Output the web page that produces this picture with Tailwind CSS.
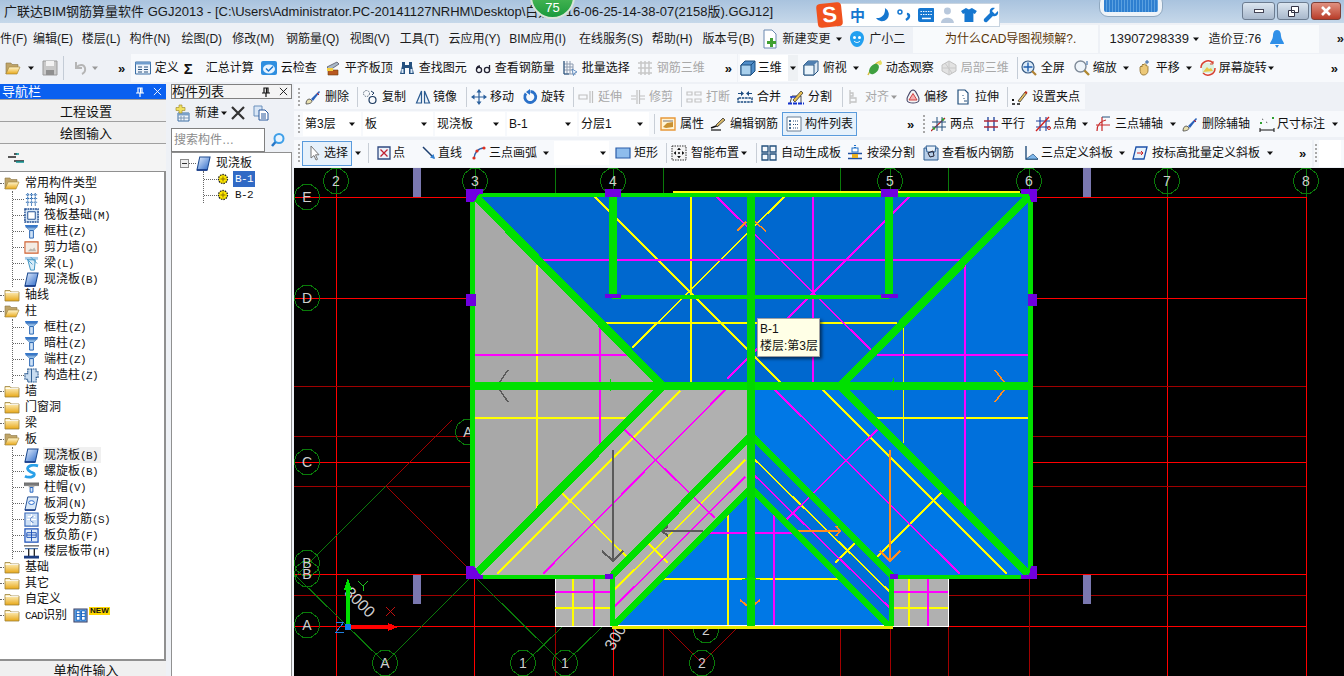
<!DOCTYPE html>
<html lang="zh-CN">
<head>
<meta charset="UTF-8" />
<title>广联达BIM钢筋算量软件 GGJ2013</title>
<script src="https://cdn.jsdelivr.net/npm/@tailwindcss/browser@4"></script>
</head>
<body class="bg-[#eef1f6]">
<!-- icon sheet -->
<svg class="absolute w-0 h-0">
<defs>
<linearGradient id="gf" x1="0" y1="0" x2="0" y2="1"><stop offset="0" stop-color="#fff6d0"/><stop offset="1" stop-color="#e8a818"/></linearGradient>
<linearGradient id="gb" x1="0" y1="0" x2="1" y2="1"><stop offset="0" stop-color="#e8f2ff"/><stop offset="1" stop-color="#2a68c8"/></linearGradient>
<symbol id="c" viewBox="0 0 10 10"><path d="M2 3.500h6L5 7z" fill="#111"/></symbol>
<symbol id="cg" viewBox="0 0 10 10"><path d="M2 3.500h6L5 7z" fill="#999"/></symbol>
<symbol id="fo" viewBox="0 0 16 16"><path d="M1 3h5l1 1.500h6V8H4l-3 6z" fill="#bfa468" stroke="#8a7544" stroke-width=".6"/><path d="M4 7h11l-3 7H1z" fill="url(#gf)" stroke="#a98b3c" stroke-width=".7"/></symbol>
<symbol id="fc" viewBox="0 0 16 16"><path d="M1 3.500h5l1 1.500h8v9H1z" fill="url(#gf)" stroke="#9c8238" stroke-width=".8"/><path d="M1.500 5.500h13" stroke="#fff" stroke-width=".8"/></symbol>
<symbol id="sv" viewBox="0 0 16 16"><path d="M1 1h14v14H1z" fill="#c8c8c8" stroke="#9a9a9a"/><path d="M4 1h8v5H4z" fill="#f2f2f2"/><path d="M4 10h8v5H4z" fill="#8f8f8f"/></symbol>
<symbol id="un" viewBox="0 0 16 16"><path d="M4 2v6h6M4.500 7.500C7 4 12 4 13 8c.5 2.500-1 5-3 6" fill="none" stroke="#b5b5b5" stroke-width="2"/></symbol>
<symbol id="def" viewBox="0 0 16 16"><path d="M.500 2h15v12H.500z" fill="#eef4fb" stroke="#3a6ea5"/><path d="M.500 2h15v2.500H.500z" fill="#6f9ccc"/><path d="M3 7h4M3 9.500h4M3 12h4M9 7h4M9 9.500h4M9 12h4" stroke="#28507c"/></symbol>
<symbol id="cl" viewBox="0 0 16 16"><rect y="1" width="16" height="14" rx="2" fill="#2f8fe0"/><ellipse cx="8" cy="9" rx="6" ry="4.500" fill="#e8f4ff"/><path d="M5 8.500l2.500 2.500L12 6.500" fill="none" stroke="#1a78d0" stroke-width="1.500"/></symbol>
<symbol id="pq" viewBox="0 0 16 16"><path d="M2 7l10-5 2 2-9 6z" fill="#a8b8c8" stroke="#556" stroke-width=".8"/><path d="M3 10h10v5H3z" fill="#b85820" stroke="#704010" stroke-width=".6"/><path d="M2 8h6v3H2z" fill="#f4d040"/></symbol>
<symbol id="bn" viewBox="0 0 16 16"><path d="M3 2h3v3h4V2h3v4l2 8h-5V8H6v6H1l2-8z" fill="#24507f"/><path d="M2.500 9h2v4h-2zM11.500 9h2v4h-2z" fill="#d8e8f8"/></symbol>
<symbol id="gl" viewBox="0 0 16 16"><circle cx="4" cy="10" r="2.600" fill="none" stroke="#223" stroke-width="1.300"/><circle cx="12" cy="10" r="2.600" fill="none" stroke="#223" stroke-width="1.300"/><path d="M1.500 9C2 7 3 6 5 6M14.500 10V5" fill="none" stroke="#223" stroke-width="1.300"/></symbol>
<symbol id="bt" viewBox="0 0 16 16"><path d="M2 1v13h12M2 4h9M2 7h9M2 10h9M5 1v13M8 1v13M11 4v10" fill="none" stroke="#8d9bb0"/><path d="M2 1v13h5" fill="none" stroke="#24507c"/><path d="M10 9l5 3-2.500 1-1 2.500z" fill="#eef4fb" stroke="#3a70b0" stroke-width=".7"/></symbol>
<symbol id="g3" viewBox="0 0 16 16"><path d="M1 3h14M1 8h14M1 13h14M4 1v14M8 1v14M12 1v14" fill="none" stroke="#c8c8c8" stroke-width="1.500"/></symbol>
<symbol id="cb" viewBox="0 0 16 16"><path d="M5 1h10v10l-4 4H1V5z" fill="#4f8dc8" stroke="#1d4f80"/><path d="M1 5h10v10H1z" fill="#a9d0ec" stroke="#1d4f80"/><path d="M11 5l4-4" stroke="#1d4f80"/></symbol>
<symbol id="cv" viewBox="0 0 16 16"><path d="M5 1h10v10l-4 4H1V5z" fill="#dfeaf4" stroke="#24527f"/><path d="M1 5h10v10H1z" fill="#eaf4fb" stroke="#24527f"/><path d="M1 5l4-4h10l-4 4z" fill="#4f7fb0"/></symbol>
<symbol id="or" viewBox="0 0 16 16"><path d="M1 15C4 8 8 3 14 1" fill="none" stroke="#d8c040" stroke-width="1.500"/><ellipse cx="7" cy="9" rx="4" ry="6" transform="rotate(40 7 9)" fill="#3fa040"/><circle cx="13" cy="3" r="2" fill="#e8e060"/></symbol>
<symbol id="lo" viewBox="0 0 16 16"><path d="M8 1l7 4v6l-7 4-7-4V5z" fill="#e2e2e2" stroke="#c2c2c2"/><path d="M4 3l7 10M8 1v14M1 8l14 0" stroke="#c8c8c8"/></symbol>
<symbol id="fs" viewBox="0 0 16 16"><circle cx="7" cy="7" r="6" fill="#dcebf8" stroke="#385c86" stroke-width="1.200"/><path d="M7 2.500v9M2.500 7h9" stroke="#2060b0" stroke-width="1.400"/><path d="M11 11l4 4" stroke="#b08030" stroke-width="2.200"/></symbol>
<symbol id="zm" viewBox="0 0 16 16"><circle cx="6.500" cy="6.500" r="5.500" fill="#eef4fa" stroke="#7e8a98" stroke-width="1.400"/><path d="M10.500 10.500l4.500 4.500" stroke="#b08830" stroke-width="2.400"/><path d="M13 1v4" stroke="#2a60a0"/></symbol>
<symbol id="pn" viewBox="0 0 16 16"><path d="M3 10V7l1-1 1 1V5l1-1 1 1v-.500l1-1 1 1V6l1-.500 1 1V11c0 2-2 4-4 4H6C4 15 3 12 3 10z" fill="#ecc878" stroke="#8c6c2c" stroke-width=".8"/><path d="M10 0v4M8 2h4" stroke="#3060a0"/></symbol>
<symbol id="rt" viewBox="0 0 16 16"><rect x="2" y="3" width="12" height="10" fill="#dcf0e0"/><path d="M3 12l4-5 2 2 2-1 2 3z" fill="#e8c848"/><path d="M13 3A7 7 0 0 0 1 8M3 13a7 7 0 0 0 12-5" fill="none" stroke="#d84030" stroke-width="1.500"/><path d="M13 1v3h-3" fill="none" stroke="#d84030"/></symbol>
<symbol id="dl" viewBox="0 0 16 16"><path d="M1 15c0-3 1-5 4-5l2 2c0 2-3 3-6 3z" fill="#e8e0b0" stroke="#444" stroke-width=".8"/><path d="M6 10l8-8 1 1-7 9z" fill="#2a60b8"/><path d="M12 4l2 2" stroke="#c02030"/></symbol>
<symbol id="cp" viewBox="0 0 16 16"><circle cx="4.500" cy="4.500" r="3" fill="none" stroke="#5a6a7a" stroke-dasharray="1.500 1"/><circle cx="10.500" cy="11" r="3.500" fill="none" stroke="#1c3a60" stroke-width="1.200"/><path d="M9 2l3 2-2 2" fill="none" stroke="#1c3a60"/></symbol>
<symbol id="mr" viewBox="0 0 16 16"><path d="M6.500 2v12H1.500z" fill="#eef4fb" stroke="#2a5a90" stroke-width="1.200"/><path d="M9.500 2v12h5z" fill="#eef4fb" stroke="#2a5a90" stroke-width="1.200"/></symbol>
<symbol id="mv" viewBox="0 0 16 16"><path d="M8 2v12M2 8h12" stroke="#2a5f9c" stroke-width="1.200"/><path d="M8 0L5.500 3.500h5zM8 16l-2.500-3.500h5zM0 8l3.500-2.500v5zM16 8l-3.500-2.500v5z" fill="#2a5f9c"/></symbol>
<symbol id="ro" viewBox="0 0 16 16"><path d="M4 4.500A5.500 5.500 0 1 0 8.500 2.500" fill="none" stroke="#2a70c8" stroke-width="2.800"/><path d="M8 0l-4 3 4 3z" fill="#2a70c8"/></symbol>
<symbol id="ex" viewBox="0 0 16 16"><path d="M1 6h8v4H1zM12 2v12M14.500 2v12" fill="none" stroke="#c0c0c0" stroke-width="1.200"/></symbol>
<symbol id="tr" viewBox="0 0 16 16"><path d="M1 7h5M1 10h5M9 7h6M9 10h6M7 1v14M9.500 1v14" fill="none" stroke="#c0c0c0" stroke-width="1.200"/></symbol>
<symbol id="br" viewBox="0 0 16 16"><path d="M1 3h5v3H1zM9 3h6v3H9zM1 10h5v3H1zM9 10h6v3H9z" fill="none" stroke="#c4c4c4" stroke-width="1.200"/></symbol>
<symbol id="mg" viewBox="0 0 16 16"><path d="M1 9v4h14V9H1" fill="none" stroke="#1a4a80" stroke-width="1.400" stroke-dasharray="2.500 .8"/><path d="M1 4.500h4M15 4.500h-4" stroke="#1a4a80"/><path d="M7 4.500L4 2v5zM9 4.500L12 2v5z" fill="#1a4a80"/></symbol>
<symbol id="sp" viewBox="0 0 16 16"><path d="M2 14l2-7h9v7" fill="#f2f6fb" stroke="#222" stroke-width=".8"/><path d="M0 14.500h16" stroke="#1030d0" stroke-width="2" stroke-dasharray="4 1"/><path d="M2 8h9" stroke="#1030d0" stroke-width="1.400"/><path d="M5 11l8-9 2 2-8 9z" fill="#e8c050" stroke="#222" stroke-width=".7"/></symbol>
<symbol id="al" viewBox="0 0 16 16"><path d="M3 1v14M3 4h3v3H3M3 9h6v4H3" fill="none" stroke="#c4c4c4" stroke-width="1.300"/></symbol>
<symbol id="of" viewBox="0 0 16 16"><path d="M8 1c3 0 3 3 5 6s2 7-5 7-7-4-5-7 2-6 5-6z" fill="#f4f4f4" stroke="#446" stroke-width="1.100"/><path d="M8 4.500l4 6.500H4z" fill="#f4b0b0" stroke="#d04040"/></symbol>
<symbol id="st" viewBox="0 0 16 16"><path d="M3 1h7l3 3v11H3z" fill="#fff" stroke="#24507c" stroke-width="1.200"/><path d="M8 6v1M9 9v1M9 12h3" stroke="#24507c"/></symbol>
<symbol id="gr" viewBox="0 0 16 16"><path d="M0 15h3M5 15h3" stroke="#111" stroke-width="1.400"/><rect y="10" width="2" height="2" fill="#111"/><path d="M6 12l7-9 2 1-7 9z" fill="#e8c060" stroke="#222" stroke-width=".7"/><path d="M13 3l2 1" stroke="#c03020" stroke-width="2"/></symbol>
<symbol id="sx" viewBox="0 0 16 16"><path d="M1 2h14v12H1z" fill="#fff4d4" stroke="#e89838" stroke-width="1.400"/><path d="M3 11l4-4 6-1v5l-7 1z" fill="#c89030"/><path d="M3 5h10" stroke="#556" stroke-width=".8"/></symbol>
<symbol id="ed" viewBox="0 0 16 16"><path d="M1 12l8-3" stroke="#111" stroke-width="1.500"/><path d="M6 9l7-7 2 2-8 7z" fill="#d8b868" stroke="#333" stroke-width=".8"/><path d="M1 14h10" stroke="#111" stroke-width="1.200"/></symbol>
<symbol id="li" viewBox="0 0 16 16"><path d="M1 1h14v14H1z" fill="#fff" stroke="#6b7f94"/><path d="M3 4h2v2H3zM3 7.500h2v2H3zM3 11h2v2H3z" fill="#406890"/><path d="M7 5h6M7 8.500h6M7 12h6" stroke="#2a4e78" stroke-dasharray="1 1"/></symbol>
<symbol id="tp" viewBox="0 0 16 16"><path d="M0 15L14 2" stroke="#b82020" stroke-width="1.100"/><path d="M6 1v14M11 1v14M1 6h14M1 11h14" stroke="#24507c" stroke-width="1"/><circle cx="3" cy="12.500" r="1.300" fill="#30a030"/><circle cx="12" cy="3.500" r="1.300" fill="#30a030"/></symbol>
<symbol id="pl" viewBox="0 0 16 16"><path d="M5 1v14M11 1v14" stroke="#1c3e98" stroke-width="1.300"/><path d="M1 5h14M1 11h14" stroke="#b02838" stroke-width="1.300"/></symbol>
<symbol id="pa" viewBox="0 0 16 16"><path d="M5 1v14M11 1v14M1 5h14M1 11h14" stroke="#1c3e98" stroke-width="1.100"/><path d="M1 15L14 1" stroke="#d02020" stroke-width="1.400"/><circle cx="14" cy="12" r="1.500" fill="none" stroke="#d02020"/></symbol>
<symbol id="ta" viewBox="0 0 16 16"><path d="M2 15C2 8 6 5 11 4M7 1v14M1 9h14" fill="none" stroke="#c82828" stroke-width="1.200"/><path d="M7 1h8" stroke="#24507c"/></symbol>
<symbol id="dm" viewBox="0 0 16 16"><path d="M1 12v4M15 12v4M1 14h14" stroke="#111"/><path d="M3 3l2 1M7 6l2 1" stroke="#444" stroke-dasharray="1 1"/><rect x="1" y="6" width="2" height="2" fill="#30a030"/><rect x="13" y="1" width="2" height="2" fill="#30a030"/></symbol>
<symbol id="se" viewBox="0 0 16 16"><path d="M5 1v12l3-2.500 2 4.500 1.500-.700-2-4.500H13z" fill="#fff" stroke="#777"/></symbol>
<symbol id="pt" viewBox="0 0 16 16"><path d="M2 2h12v12H2z" fill="#eef3fb" stroke="#304a80" stroke-width="1.300"/><path d="M4.500 4.500l7 7M11.500 4.500l-7 7" stroke="#c02030" stroke-width="1.300"/></symbol>
<symbol id="ln" viewBox="0 0 16 16"><path d="M2 2l11 11" stroke="#1d3f70" stroke-width="1.500"/><path d="M14 14l-5-1.500 3.500-3.500z" fill="#2f7fd0"/></symbol>
<symbol id="ac" viewBox="0 0 16 16"><path d="M3 14C3 8 7 3 13 3" fill="none" stroke="#3060a8" stroke-width="1.500"/><circle cx="3" cy="13" r="1.600" fill="#e03020"/><circle cx="6" cy="6" r="1.600" fill="#e03020"/><circle cx="13" cy="3" r="1.600" fill="#e03020"/></symbol>
<symbol id="re" viewBox="0 0 16 16"><path d="M1 3h14v10H1z" fill="#8ebcec" stroke="#2a5ca8" stroke-width="1.200"/></symbol>
<symbol id="sm" viewBox="0 0 16 16"><path d="M1 1h14v14H1z" fill="#f4f4f4" stroke="#333" stroke-dasharray="1.500 1"/><path d="M8 3v10M3 8h10" stroke="#111" stroke-dasharray="2 2"/><path d="M8 3L6 5h4zM8 13l-2-2h4zM3 8l2-2v4zM13 8l-2-2v4z" fill="#111"/></symbol>
<symbol id="au" viewBox="0 0 16 16"><path d="M1 1h6v6H1zM9 1h6v6H9zM1 9h6v6H1zM9 9h6v6H9z" fill="#f4f8fc" stroke="#24507c" stroke-width="1.300"/></symbol>
<symbol id="bs" viewBox="0 0 16 16"><path d="M8 0v3" stroke="#1f70c8" stroke-width="2" stroke-dasharray="1 1"/><rect x="5" y="3" width="6" height="4" fill="#fff" stroke="#1f70c8"/><path d="M1 8.500h14M1 13.500h14" stroke="#1f50a0" stroke-width="1.400"/><rect x="5" y="9" width="6" height="4" fill="#e8b020"/></symbol>
<symbol id="vi" viewBox="0 0 16 16"><path d="M1 3h14v12H1z" fill="#b8cee8" stroke="#2a5a90"/><path d="M3 1h10l-1 6H4z" fill="#e8f0f8" stroke="#2a5a90"/><path d="M5 8l5-2 1 5-4 1z" fill="none" stroke="#223"/></symbol>
<symbol id="tri" viewBox="0 0 16 16"><path d="M2 1v13h12" fill="none" stroke="#24507c" stroke-width="1.400"/><path d="M2 14L9 9l5 5z" fill="#7fb8ec" stroke="#24507c" stroke-width=".7"/></symbol>
<symbol id="hg" viewBox="0 0 16 16"><path d="M4 2h11l-3 12H1z" fill="#e8f3fd" stroke="#1c50a8" stroke-width="1.300"/><path d="M5 8h6M9 6l2 2-2 2" fill="none" stroke="#d02020"/></symbol>
<symbol id="nw" viewBox="0 0 18 18"><path d="M3 9h11v8H3z" fill="#f2f6fb" stroke="#3a6ea5"/><path d="M3 9h11v2.500H3z" fill="#7aa0c8"/><path d="M6 12v5M9 12v5M3 14h11" stroke="#7a96b4"/><path d="M4 1h3v2.500h3v3H7V9H4V6.500H1v-3h3z" fill="#efe060" stroke="#a89030" stroke-width=".7"/></symbol>
<symbol id="xx" viewBox="0 0 16 16"><path d="M2 2l12 12M14 2L2 14" stroke="#333" stroke-width="2.200"/></symbol>
<symbol id="cc" viewBox="0 0 16 16"><path d="M1 1h8v10H1z" fill="#d8e6f6" stroke="#6a90bc"/><path d="M6 5h6l3 3v7H6z" fill="#fff" stroke="#28589c"/><path d="M8 9h5M8 11h5M8 13h5" stroke="#28589c"/></symbol>
<symbol id="pin" viewBox="0 0 10 10"><path d="M3 1h4v5H3zM1 6h8M5 6v4" fill="none" stroke="currentColor" stroke-width="1.200"/><path d="M5.500 1v5" stroke="currentColor" stroke-width="1.200"/></symbol>
<symbol id="xs" viewBox="0 0 10 10"><path d="M1 1l8 8M9 1L1 9" stroke="currentColor"/></symbol>
<symbol id="mag" viewBox="0 0 16 16"><circle cx="9" cy="6.500" r="4.500" fill="#e8f4ff" stroke="#40a0e8" stroke-width="2"/><path d="M5.500 10L2 14" stroke="#2878c8" stroke-width="2.500"/></symbol>
<symbol id="coin" viewBox="0 0 12 12"><circle cx="6" cy="6" r="4.500" fill="#ffe800" stroke="#222" stroke-dasharray="1.500 1" stroke-width="1.300"/><path d="M3.500 6h5M6 3.500v5" stroke="#8a7000"/></symbol>
<symbol id="t1" viewBox="0 0 16 16"><path d="M2 3h12M2 7h12M2 11h12M4 1v14M8 1v14M12 1v14" stroke="#2868b0" stroke-dasharray="1.500 .7" stroke-width="1.100"/></symbol>
<symbol id="t2" viewBox="0 0 16 16"><path d="M1 1h14v14H1z" fill="#d8e8f8" stroke="#1c4a90" stroke-width="1.500" stroke-dasharray="2 .7"/><path d="M4 4h8v8H4z" fill="#fff" stroke="#1c4a90"/></symbol>
<symbol id="t3" viewBox="0 0 16 16"><path d="M1 1h14l-1 3H2z" fill="#3878c8"/><path d="M3 4h10l-3 3H6z" fill="#90bce8" stroke="#2860a8" stroke-width=".5"/><path d="M6 7h4v8H6z" fill="#cfe2f6" stroke="#2060b0"/></symbol>
<symbol id="t4" viewBox="0 0 16 16"><path d="M1 2h14v12H1z" fill="#f4ece4" stroke="#d06030" stroke-width="1.200"/><path d="M4 12l3-3 2 1 2-2 2 4z" fill="#bdb8b0"/></symbol>
<symbol id="t5" viewBox="0 0 16 16"><path d="M1 1h14v3H1z" fill="#a8cce8"/><path d="M4 4h8l-1 11H7z" fill="#d8ecf8" stroke="#3a90c0"/><path d="M3 3l6 6M7 1l7 7" stroke="#4098c8"/></symbol>
<symbol id="t6" viewBox="0 0 16 16"><path d="M4 1h11l-3 14H1z" fill="url(#gb)" stroke="#1c4a90" stroke-width="1.100"/><path d="M1 15h11" stroke="#0c3080" stroke-width="1.500"/></symbol>
<symbol id="t7" viewBox="0 0 16 16"><path d="M4 1h9v3h2v6h-2v5H4v-3H1V6h3z" fill="#c8dcf0" stroke="#2a5a90" stroke-dasharray="2 .6" stroke-width="1.100"/><path d="M8 1v14" stroke="#2a5a90"/></symbol>
<symbol id="t8" viewBox="0 0 16 16"><path d="M15 2C8 0 1 3 5 7s6 1 6 4-6 4-10 2" fill="none" stroke="#2aa0e8" stroke-width="3"/></symbol>
<symbol id="t9" viewBox="0 0 16 16"><path d="M0 3h16v3H0z" fill="#787878" stroke="#555" stroke-width=".5"/><path d="M5 6h6v2H5z" fill="#a8a8a8"/><path d="M6.500 8h3v5h-3z" fill="#d8e8f8" stroke="#1c60c0"/></symbol>
<symbol id="t10" viewBox="0 0 16 16"><path d="M4 1h11l-3 14H1z" fill="#d8e8f8" stroke="#1c4a90"/><ellipse cx="8" cy="7" rx="3" ry="2" fill="#fff" stroke="#1c60c8"/><path d="M1 15h11" stroke="#0c3080" stroke-width="1.500"/></symbol>
<symbol id="t11" viewBox="0 0 16 16"><path d="M1 1h14v14H1z" fill="#cde0f6" stroke="#3868b8" stroke-width="1.200"/><path d="M8 2v12M3 8h10M4 5h8" stroke="#fff" stroke-width="1.300"/><path d="M10 5C6 5 6 11 10 11" fill="none" stroke="#3868b8"/></symbol>
<symbol id="t12" viewBox="0 0 16 16"><path d="M1 1h14v14H1z" fill="#e0ecfa" stroke="#1c50b8" stroke-width="1.300"/><path d="M3 5h10v5H3zM8 2v12M3 7.500h10" fill="none" stroke="#1c50b8"/></symbol>
<symbol id="t13" viewBox="0 0 16 16"><path d="M0 2h16" stroke="#222"/><path d="M1 5h14" stroke="#3868a8" stroke-width="1.200"/><path d="M5 5v8M11 5v8" stroke="#222" stroke-width="1.400"/><path d="M0 14h16" stroke="#1c3c80" stroke-width="3"/></symbol>
<symbol id="t14" viewBox="0 0 16 16"><path d="M1 1h14v14H1z" fill="#64a8e8" stroke="#446" stroke-width="1.100"/><path d="M3.500 3h4v10h-4zM9 3h4v10H9z" fill="#fff" stroke="#1060c0"/><path d="M3.500 6h4M3.500 9h4M9 6h4M9 9h4" stroke="#1060c0"/></symbol>
<g id="bb"><polygon points="13,0 10.500,7.600 4,12.400 -4,12.400 -10.500,7.600 -13,0 -10.500,-7.600 -4,-12.400 4,-12.400 10.500,-7.600" fill="none" stroke="#0a7a0a"/></g>
</defs>
</svg>

<div class="w-[1344px] h-[676px] overflow-hidden relative flex flex-col text-[12px] leading-none text-[#111] font-['Liberation_Sans','Noto_Sans_CJK_SC',sans-serif] whitespace-nowrap">

  <!-- title bar -->
  <div class="h-[23px] shrink-0 relative pl-[4px] flex items-center text-[13px] text-[#1a1a1a] bg-gradient-to-b from-[#a9c3de] to-[#c6d8ea]">
    广联达BIM钢筋算量软件 GGJ2013 - [C:\Users\Administrator.PC-20141127NRHM\Desktop\白龙2016-06-25-14-38-07(2158版).GGJ12]
    <div class="absolute left-[530px] top-[-27px] w-[45px] h-[46px] rounded-full bg-gradient-to-b from-[#6cd46c] to-[#159a3c] border-2 border-[#d8e4d8] flex items-end justify-center pb-[3px] text-white text-[13px]">75</div>
    <div class="absolute left-[837px] top-[3px] w-[163px] h-[24px] bg-white border border-[#c8d4e0] flex items-center pl-[12px] gap-[6px] text-[#1677d0] text-[15px] font-bold">
      <span class="w-[18px]">中</span>
      <svg class="w-[16px] h-[16px]" viewBox="0 0 16 16"><path d="M11 1a7 7 0 1 1-9 10c5 1 10-3 9-10z" fill="#1677d0"/></svg>
      <svg class="w-[16px] h-[16px]" viewBox="0 0 16 16"><circle cx="4" cy="5" r="2" fill="none" stroke="#1677d0" stroke-width="1.500"/><path d="M11 7c3 0 3 4-1 6" fill="none" stroke="#1677d0" stroke-width="2.400"/></svg>
      <svg class="w-[17px] h-[14px]" viewBox="0 0 17 14"><rect width="17" height="14" rx="2" fill="#1677d0"/><path d="M2.500 3.500h12M2.500 6.500h12" stroke="#fff" stroke-dasharray="1.500 1"/><path d="M4 10.500h9" stroke="#fff" stroke-width="1.500"/></svg>
      <svg class="w-[15px] h-[16px]" viewBox="0 0 15 16"><circle cx="7.500" cy="4" r="3.500" fill="#b8c8dc"/><path d="M1 16c0-7 13-7 13 0z" fill="#b8c8dc"/></svg>
      <svg class="w-[16px] h-[16px]" viewBox="0 0 16 16"><path d="M5 1l3 1.500L11 1l5 3-2 3-1.500-.7V15h-9V6.300L2 7 0 4z" fill="#1677d0"/></svg>
      <svg class="w-[16px] h-[16px]" viewBox="0 0 16 16"><path d="M15 4l-3 3-3-3 3-3c-3-1-6 1-5 5L1 12c-1 2 1 4 3 3l6-6c4 1 6-2 5-5z" fill="#1677d0"/></svg>
    </div>
    <div class="absolute left-[817px] top-[3px] w-[25px] h-[24px] rounded-[4px] bg-[#f0521e] text-white text-[22px] font-bold flex items-center justify-center -rotate-6">S</div>
    <div class="absolute left-[1099px] top-[-6px] w-[64px] h-[23px] rounded-[9px] bg-[#eef3f8] border border-[#8fa8c0] flex items-center justify-center">
      <div class="w-[54px] h-[13px] rounded-[2px] bg-[repeating-linear-gradient(90deg,#2e7fd0_0_2px,#5aa0e0_2px_3px)]"></div>
    </div>
    <div class="absolute left-[1242px] top-[2px] flex gap-[2px]">
      <div class="w-[33px] h-[18px] rounded-[3px] border border-[#6c7c90] bg-gradient-to-b from-[#dce6f0] to-[#a8b8cc] flex items-center justify-center"><div class="w-[10px] h-[4px] bg-white border border-[#445]"></div></div>
      <div class="w-[32px] h-[18px] rounded-[3px] border border-[#6c7c90] bg-gradient-to-b from-[#dce6f0] to-[#a8b8cc] flex items-center justify-center"><svg class="w-[11px] h-[11px]" viewBox="0 0 11 11"><path d="M3.500.5h7v6h-7zM.5 4.500h6v6h-6z" fill="#fff" stroke="#334"/></svg></div>
      <div class="w-[30px] h-[18px] rounded-[3px] border border-[#7c4038] bg-gradient-to-b from-[#e09080] to-[#b83c28] flex items-center justify-center"><svg class="w-[12px] h-[10px]" viewBox="0 0 12 10"><path d="M2 1l8 8M10 1L2 9" stroke="#fff" stroke-width="2.600"/></svg></div>
    </div>
  </div>

  <!-- menu bar -->
  <div class="h-[30px] shrink-0 flex items-center pt-[1px] text-[#1c1c1c]">
    <span class="w-[33px]">件(F)</span><span class="w-[49px]">编辑(E)</span><span class="w-[48px]">楼层(L)</span><span class="w-[52px]">构件(N)</span><span class="w-[51px]">绘图(D)</span><span class="w-[54px]">修改(M)</span><span class="w-[64px]">钢筋量(Q)</span><span class="w-[50px]">视图(V)</span><span class="w-[49px]">工具(T)</span><span class="w-[61px]">云应用(Y)</span><span class="w-[70px]">BIM应用(I)</span><span class="w-[73px]">在线服务(S)</span><span class="w-[51px]">帮助(H)</span><span class="w-[60px]">版本号(B)</span>
    <div class="flex items-center gap-1 w-[72px]"><svg class="w-4 h-5 shrink-0" viewBox="0 0 16 20"><path d="M2 1h8l4 4v14H2z" fill="#fff" stroke="#6a88b0"/><path d="M8 9h3v3h3v3h-3v3H8v-3H5v-3h3z" fill="#40a030"/></svg><span>新建变更</span></div>
    <svg class="w-[10px] h-[10px] shrink-0"><use href="#c"/></svg>
    <div class="ml-[5px] flex items-center gap-1 w-[62px]"><svg class="w-4 h-[18px] shrink-0" viewBox="0 0 16 18"><path d="M8 1c4 0 7 3 7 7s-3 9-7 9-7-5-7-9 3-7 7-7z" fill="#23a0f0"/><circle cx="5.500" cy="7.500" r="1.500" fill="#fff"/><circle cx="10.500" cy="7.500" r="1.500" fill="#fff"/><path d="M5 11c2 2 4 2 6 0" fill="none" stroke="#fff"/></svg><span>广小二</span></div>
    <div class="w-[186px] h-[28px] ml-[2px] bg-[#f8fafc] flex items-center pl-[32px] text-[#5a3608]">为什么CAD导图视频解?.</div>
    <div class="ml-[2px] w-[219px] h-[28px] bg-[#f8fafc] flex items-center pl-[9px]">
      <span class="w-[82px] text-[13px]">13907298339</span><svg class="w-[10px] h-[10px] shrink-0 mr-[7px]"><use href="#c"/></svg><span class="w-[62px]">造价豆:76</span>
      <svg class="w-[14px] h-[20px]" viewBox="0 0 14 20"><path d="M7 1c3 0 4 3 4 6s3 6 3 8H0c0-2 3-5 3-8s1-6 4-6zM5 16h4l-2 3z" fill="#2f8fe8"/></svg>
    </div>
    <span class="ml-[18px] font-bold text-[13px]">»</span>
  </div>

  <!-- standard toolbar -->
  <div class="h-[30px] shrink-0 flex items-center pl-[5px]">
    <svg class="w-[16px] h-[16px] mr-[5px] shrink-0"><use href="#fo"/></svg><svg class="w-[10px] h-[10px] shrink-0"><use href="#c"/></svg>
    <svg class="w-[16px] h-[16px] ml-[6px] shrink-0"><use href="#sv"/></svg>
    <div class="w-px h-[24px] ml-[5px] bg-[#c4ccd6]"></div>
    <svg class="w-[16px] h-[16px] ml-[8px] shrink-0"><use href="#un"/></svg><svg class="w-[10px] h-[10px] ml-[2px] shrink-0"><use href="#cg"/></svg>
    <span class="ml-[18px] w-[13px] font-bold text-[13px]">»</span>
    <div class="w-[607px] h-[28px] bg-[#f7f9fc] flex items-center pl-[4px]">
      <div class="flex items-center gap-1 w-[48px]"><svg class="w-4 h-4 shrink-0"><use href="#def"/></svg><span>定义</span></div>
      <div class="w-[23px] text-[15px] font-bold pl-[1px]">Σ</div><span class="w-[55px]">汇总计算</span>
      <div class="flex items-center gap-1 w-[64px]"><svg class="w-4 h-4 shrink-0"><use href="#cl"/></svg><span>云检查</span></div>
      <div class="flex items-center gap-1 w-[74px]"><svg class="w-4 h-4 shrink-0"><use href="#pq"/></svg><span>平齐板顶</span></div>
      <div class="flex items-center gap-1 w-[76px]"><svg class="w-4 h-4 shrink-0"><use href="#bn"/></svg><span>查找图元</span></div>
      <div class="flex items-center gap-1 w-[87px]"><svg class="w-4 h-4 shrink-0"><use href="#gl"/></svg><span>查看钢筋量</span></div>
      <div class="flex items-center gap-1 w-[75px]"><svg class="w-4 h-4 shrink-0"><use href="#bt"/></svg><span>批量选择</span></div>
      <div class="flex items-center gap-1 w-[88px] text-[#a8a8a8]"><svg class="w-4 h-4 shrink-0"><use href="#g3"/></svg><span>钢筋三维</span></div>
      <span class="w-[12px] font-bold text-[13px] text-[#111]">»</span>
    </div>
    <div class="w-[612px] h-[28px] ml-[1px] bg-[#f7f9fc] flex items-center pl-[2px]">
      <div class="flex items-center gap-[2px] w-[48px] h-[26px] bg-white"><svg class="w-4 h-4 shrink-0"><use href="#cb"/></svg><span>三维</span></div><div class="h-[26px] flex items-center bg-[#eef1f4]"><svg class="w-[10px] h-[10px] shrink-0"><use href="#c"/></svg></div>
      <div class="ml-[5px] flex items-center gap-1 w-[48px]"><svg class="w-4 h-4 shrink-0"><use href="#cv"/></svg><span>俯视</span></div><svg class="w-[10px] h-[10px] shrink-0"><use href="#c"/></svg>
      <div class="ml-[6px] flex items-center gap-[3px] w-[74px]"><svg class="w-4 h-4 shrink-0"><use href="#or"/></svg><span>动态观察</span></div>
      <div class="flex items-center gap-1 w-[76px] text-[#a8a8a8]"><svg class="w-4 h-4 shrink-0"><use href="#lo"/></svg><span>局部三维</span></div>
      <div class="w-px h-[22px] bg-[#c4ccd6]"></div>
      <div class="ml-[3px] flex items-center gap-1 w-[53px]"><svg class="w-4 h-4 shrink-0"><use href="#fs"/></svg><span>全屏</span></div>
      <div class="flex items-center gap-[3px] w-[47px]"><svg class="w-4 h-4 shrink-0"><use href="#zm"/></svg><span>缩放</span></div><svg class="w-[10px] h-[10px] shrink-0"><use href="#c"/></svg>
      <div class="ml-[6px] flex items-center gap-[3px] w-[47px]"><svg class="w-4 h-4 shrink-0"><use href="#pn"/></svg><span>平移</span></div><svg class="w-[10px] h-[10px] shrink-0"><use href="#c"/></svg>
      <div class="ml-[6px] flex items-center gap-[3px] w-[66px]"><svg class="w-4 h-4 shrink-0"><use href="#rt"/></svg><span>屏幕旋转</span></div><svg class="w-[10px] h-[10px] shrink-0"><use href="#c"/></svg>
      <span class="ml-[55px] font-bold text-[13px]">»</span>
    </div>
  </div>

  <!-- body -->
  <div class="flex-1 flex min-h-0">
    <!-- navigation panel -->
    <div class="w-[166px] shrink-0 flex flex-col pt-[1px]">
      <div class="h-[15px] shrink-0 bg-[#0a60f0] text-white text-[13px] flex items-center justify-between pr-[4px] overflow-hidden"><span class="ml-[2px]">导航栏</span><div class="flex gap-[8px] items-center"><svg class="w-[10px] h-[10px]"><use href="#pin"/></svg><svg class="w-[9px] h-[9px]"><use href="#xs"/></svg></div></div>
      <div class="h-[23px] shrink-0 flex items-center justify-center pt-[1px] text-[13px] bg-[#f0f0f0] border-y border-[#a0a0a0] pl-[6px]">工程设置</div>
      <div class="h-[22px] shrink-0 flex items-center justify-center pt-[1px] text-[13px] bg-[#f0f0f0] border-b border-[#a0a0a0] pl-[6px]">绘图输入</div>
      <div class="h-[27px] shrink-0 bg-[#f4f4f4] flex items-center pl-[8px]"><svg class="w-[17px] h-[10px]" viewBox="0 0 17 10"><path d="M0 4h8M6 1h3M6 8h10" stroke="#222" stroke-width="1.500"/><path d="M8 1h3M8 9h8" stroke="#0c9090" stroke-width="1.500"/></svg></div>
      <div class="flex-1 min-h-0 bg-white border-t border-r-2 border-b-2 border-[#909090] pt-[3px] flex flex-col">
        <div class="flex items-center h-[16px]"><div class="w-[4px] border-t border-dotted border-[#666]"></div><svg class="w-4 h-4"><use href="#fo"/></svg><span class="ml-[5px]">常用构件类型</span></div>
        <div class="ml-[12px] border-l border-dotted border-[#666]">
          <div class="flex items-center h-[16px]"><div class="w-[11px] border-t border-dotted border-[#666]"></div><svg class="w-[15px] h-[15px]"><use href="#t1"/></svg><span class="ml-[5px]">轴网<span class="font-['Liberation_Mono'] text-[11px] tracking-[-0.6px]">(J)</span></span></div>
          <div class="flex items-center h-[16px]"><div class="w-[11px] border-t border-dotted border-[#666]"></div><svg class="w-[15px] h-[15px]"><use href="#t2"/></svg><span class="ml-[5px]">筏板基础<span class="font-['Liberation_Mono'] text-[11px] tracking-[-0.6px]">(M)</span></span></div>
          <div class="flex items-center h-[16px]"><div class="w-[11px] border-t border-dotted border-[#666]"></div><svg class="w-[15px] h-[15px]"><use href="#t3"/></svg><span class="ml-[5px]">框柱<span class="font-['Liberation_Mono'] text-[11px] tracking-[-0.6px]">(Z)</span></span></div>
          <div class="flex items-center h-[16px]"><div class="w-[11px] border-t border-dotted border-[#666]"></div><svg class="w-[15px] h-[15px]"><use href="#t4"/></svg><span class="ml-[5px]">剪力墙<span class="font-['Liberation_Mono'] text-[11px] tracking-[-0.6px]">(Q)</span></span></div>
          <div class="flex items-center h-[16px]"><div class="w-[11px] border-t border-dotted border-[#666]"></div><svg class="w-[15px] h-[15px]"><use href="#t5"/></svg><span class="ml-[5px]">梁<span class="font-['Liberation_Mono'] text-[11px] tracking-[-0.6px]">(L)</span></span></div>
          <div class="flex items-center h-[16px]"><div class="w-[11px] border-t border-dotted border-[#666]"></div><svg class="w-[15px] h-[15px]"><use href="#t6"/></svg><span class="ml-[5px]">现浇板<span class="font-['Liberation_Mono'] text-[11px] tracking-[-0.6px]">(B)</span></span></div>
        </div>
        <div class="flex items-center h-[16px]"><div class="w-[4px] border-t border-dotted border-[#666]"></div><svg class="w-4 h-4"><use href="#fc"/></svg><span class="ml-[5px]">轴线</span></div>
        <div class="flex items-center h-[16px]"><div class="w-[4px] border-t border-dotted border-[#666]"></div><svg class="w-4 h-4"><use href="#fo"/></svg><span class="ml-[5px]">柱</span></div>
        <div class="ml-[12px] border-l border-dotted border-[#666]">
          <div class="flex items-center h-[16px]"><div class="w-[11px] border-t border-dotted border-[#666]"></div><svg class="w-[15px] h-[15px]"><use href="#t3"/></svg><span class="ml-[5px]">框柱<span class="font-['Liberation_Mono'] text-[11px] tracking-[-0.6px]">(Z)</span></span></div>
          <div class="flex items-center h-[16px]"><div class="w-[11px] border-t border-dotted border-[#666]"></div><svg class="w-[15px] h-[15px]"><use href="#t3"/></svg><span class="ml-[5px]">暗柱<span class="font-['Liberation_Mono'] text-[11px] tracking-[-0.6px]">(Z)</span></span></div>
          <div class="flex items-center h-[16px]"><div class="w-[11px] border-t border-dotted border-[#666]"></div><svg class="w-[15px] h-[15px]"><use href="#t3"/></svg><span class="ml-[5px]">端柱<span class="font-['Liberation_Mono'] text-[11px] tracking-[-0.6px]">(Z)</span></span></div>
          <div class="flex items-center h-[16px]"><div class="w-[11px] border-t border-dotted border-[#666]"></div><svg class="w-[15px] h-[15px]"><use href="#t7"/></svg><span class="ml-[5px]">构造柱<span class="font-['Liberation_Mono'] text-[11px] tracking-[-0.6px]">(Z)</span></span></div>
        </div>
        <div class="flex items-center h-[16px]"><div class="w-[4px] border-t border-dotted border-[#666]"></div><svg class="w-4 h-4"><use href="#fc"/></svg><span class="ml-[5px]">墙</span></div>
        <div class="flex items-center h-[16px]"><div class="w-[4px] border-t border-dotted border-[#666]"></div><svg class="w-4 h-4"><use href="#fc"/></svg><span class="ml-[5px]">门窗洞</span></div>
        <div class="flex items-center h-[16px]"><div class="w-[4px] border-t border-dotted border-[#666]"></div><svg class="w-4 h-4"><use href="#fc"/></svg><span class="ml-[5px]">梁</span></div>
        <div class="flex items-center h-[16px]"><div class="w-[4px] border-t border-dotted border-[#666]"></div><svg class="w-4 h-4"><use href="#fo"/></svg><span class="ml-[5px]">板</span></div>
        <div class="ml-[12px] border-l border-dotted border-[#666]">
          <div class="flex items-center h-[16px]"><div class="w-[11px] border-t border-dotted border-[#666]"></div><svg class="w-[15px] h-[15px]"><use href="#t6"/></svg><span class="ml-[4px] px-[1px] h-[16px] w-[58px] flex items-center bg-[#f0f0f0]"><span>现浇板<span class="font-['Liberation_Mono'] text-[11px] tracking-[-0.6px]">(B)</span></span></span></div>
          <div class="flex items-center h-[16px]"><div class="w-[11px] border-t border-dotted border-[#666]"></div><svg class="w-[15px] h-[15px]"><use href="#t8"/></svg><span class="ml-[5px]">螺旋板<span class="font-['Liberation_Mono'] text-[11px] tracking-[-0.6px]">(B)</span></span></div>
          <div class="flex items-center h-[16px]"><div class="w-[11px] border-t border-dotted border-[#666]"></div><svg class="w-[15px] h-[15px]"><use href="#t9"/></svg><span class="ml-[5px]">柱帽<span class="font-['Liberation_Mono'] text-[11px] tracking-[-0.6px]">(V)</span></span></div>
          <div class="flex items-center h-[16px]"><div class="w-[11px] border-t border-dotted border-[#666]"></div><svg class="w-[15px] h-[15px]"><use href="#t10"/></svg><span class="ml-[5px]">板洞<span class="font-['Liberation_Mono'] text-[11px] tracking-[-0.6px]">(N)</span></span></div>
          <div class="flex items-center h-[16px]"><div class="w-[11px] border-t border-dotted border-[#666]"></div><svg class="w-[15px] h-[15px]"><use href="#t11"/></svg><span class="ml-[5px]">板受力筋<span class="font-['Liberation_Mono'] text-[11px] tracking-[-0.6px]">(S)</span></span></div>
          <div class="flex items-center h-[16px]"><div class="w-[11px] border-t border-dotted border-[#666]"></div><svg class="w-[15px] h-[15px]"><use href="#t12"/></svg><span class="ml-[5px]">板负筋<span class="font-['Liberation_Mono'] text-[11px] tracking-[-0.6px]">(F)</span></span></div>
          <div class="flex items-center h-[16px]"><div class="w-[11px] border-t border-dotted border-[#666]"></div><svg class="w-[15px] h-[15px]"><use href="#t13"/></svg><span class="ml-[5px]">楼层板带<span class="font-['Liberation_Mono'] text-[11px] tracking-[-0.6px]">(H)</span></span></div>
        </div>
        <div class="flex items-center h-[16px]"><div class="w-[4px] border-t border-dotted border-[#666]"></div><svg class="w-4 h-4"><use href="#fc"/></svg><span class="ml-[5px]">基础</span></div>
        <div class="flex items-center h-[16px]"><div class="w-[4px] border-t border-dotted border-[#666]"></div><svg class="w-4 h-4"><use href="#fc"/></svg><span class="ml-[5px]">其它</span></div>
        <div class="flex items-center h-[16px]"><div class="w-[4px] border-t border-dotted border-[#666]"></div><svg class="w-4 h-4"><use href="#fc"/></svg><span class="ml-[5px]">自定义</span></div>
        <div class="flex items-center h-[16px]"><div class="w-[4px] border-t border-dotted border-[#666]"></div><svg class="w-4 h-4"><use href="#fc"/></svg><span class="ml-[5px]"><span class="font-['Liberation_Mono'] text-[11px] tracking-[-0.6px]">CAD</span>识别</span><svg class="w-[15px] h-[15px] ml-[6px]"><use href="#t14"/></svg><span class="ml-[1px] mb-[8px] px-[1px] bg-[#ffd800] text-[8px] font-bold">NEW</span></div>
      </div>
      <div class="h-[15px] shrink-0 bg-[#f0f0f0] flex items-end justify-center text-[13px] pl-[6px] overflow-hidden"><span class="-mb-[1px]">单构件输入</span></div>
    </div>

    <!-- component list -->
    <div class="w-[128px] shrink-0 flex flex-col pl-[5px] pr-[2px] pt-[1px]">
      <div class="h-[15px] shrink-0 border border-[#808080] bg-[#f4f4f4] flex items-center justify-between pr-[3px] text-[13px]"><span>构件列表</span><div class="flex gap-[8px] items-center"><svg class="w-[10px] h-[10px]"><use href="#pin"/></svg><svg class="w-[9px] h-[9px]"><use href="#xs"/></svg></div></div>
      <div class="h-[28px] shrink-0 flex items-center pl-[4px]">
        <svg class="w-[18px] h-[18px] shrink-0"><use href="#nw"/></svg><span class="ml-[2px]">新建</span><svg class="w-[10px] h-[10px] shrink-0"><use href="#c"/></svg>
        <svg class="w-4 h-4 ml-[1px] shrink-0"><use href="#xx"/></svg><svg class="w-4 h-4 ml-[7px] shrink-0"><use href="#cc"/></svg>
      </div>
      <div class="h-[25px] shrink-0 flex items-center">
        <div class="w-[94px] h-[24px] bg-white border border-[#808080] flex items-center pl-[2px] text-[#8c8c8c] text-[12px]">搜索构件…</div>
        <svg class="w-4 h-4 ml-[5px]"><use href="#mag"/></svg>
      </div>
      <div class="flex-1 bg-white border-x border-t border-[#909090] pt-[2px]">
        <div class="flex items-center h-[16px] pl-[8px]"><div class="w-[9px] h-[9px] border border-[#8c8c8c] bg-[#eee] flex items-center justify-center"><div class="w-[5px] h-px bg-[#333]"></div></div><div class="w-[7px] border-t border-dotted border-[#666]"></div><svg class="w-[15px] h-[15px]"><use href="#t6"/></svg><span class="ml-[5px]">现浇板</span></div>
        <div class="ml-[31px] border-l border-dotted border-[#666]">
          <div class="flex items-center h-[16px]"><div class="w-[13px] border-t border-dotted border-[#666]"></div><svg class="w-[12px] h-[12px]"><use href="#coin"/></svg><span class="ml-[4px] w-[22px] h-[16px] bg-[#316ac5] text-white font-['Liberation_Mono'] text-[11px] tracking-[-0.6px] flex items-center justify-center">B-1</span></div>
          <div class="flex items-center h-[16px]"><div class="w-[13px] border-t border-dotted border-[#666]"></div><svg class="w-[12px] h-[12px]"><use href="#coin"/></svg><span class="ml-[4px] w-[22px] h-[16px] font-['Liberation_Mono'] text-[11px] tracking-[-0.6px] flex items-center justify-center">B-2</span></div>
        </div>
      </div>
    </div>

    <!-- drawing side -->
    <div class="flex-1 min-w-0 flex flex-col">
      <div class="h-[27px] shrink-0 pt-[1px]">
        <div class="w-[791px] pl-[4px] h-[25px] bg-[#f7f9fc] flex items-center">
          <div class="w-[2px] h-[18px] border-l-2 border-dotted border-[#a8a8a8] mr-[5px]"></div>
          <div class="flex items-center gap-1 w-[53px] mr-[4px] border-r border-[#c8ced6] h-[20px]"><svg class="w-4 h-4 shrink-0"><use href="#dl"/></svg><span>删除</span></div>
          <div class="flex items-center gap-1 w-[53px]"><svg class="w-4 h-4 shrink-0"><use href="#cp"/></svg><span>复制</span></div>
          <div class="flex items-center gap-[2px] w-[52px] mr-[4px] border-r border-[#c8ced6] h-[20px]"><svg class="w-4 h-4 shrink-0"><use href="#mr"/></svg><span>镜像</span></div>
          <div class="flex items-center gap-[3px] w-[51px]"><svg class="w-4 h-4 shrink-0"><use href="#mv"/></svg><span>移动</span></div>
          <div class="flex items-center gap-[3px] w-[52px] mr-[4px] border-r border-[#c8ced6] h-[20px]"><svg class="w-4 h-4 shrink-0"><use href="#ro"/></svg><span>旋转</span></div>
          <div class="flex items-center gap-1 w-[52px] text-[#a8a8a8]"><svg class="w-4 h-4 shrink-0"><use href="#ex"/></svg><span>延伸</span></div>
          <div class="flex items-center gap-[3px] w-[52px] mr-[4px] text-[#a8a8a8] border-r border-[#c8ced6] h-[20px]"><svg class="w-4 h-4 shrink-0"><use href="#tr"/></svg><span>修剪</span></div>
          <div class="flex items-center gap-1 w-[51px] text-[#a8a8a8]"><svg class="w-4 h-4 shrink-0"><use href="#br"/></svg><span>打断</span></div>
          <div class="flex items-center gap-1 w-[51px]"><svg class="w-4 h-4 shrink-0"><use href="#mg"/></svg><span>合并</span></div>
          <div class="flex items-center gap-1 w-[55px] mr-[4px] border-r border-[#c8ced6] h-[20px]"><svg class="w-4 h-4 shrink-0"><use href="#sp"/></svg><span>分割</span></div>
          <div class="flex items-center gap-[2px] w-[58px] text-[#a8a8a8]"><svg class="w-4 h-4 shrink-0"><use href="#al"/></svg><span>对齐</span><svg class="w-[10px] h-[10px] -ml-[2px] shrink-0"><use href="#cg"/></svg></div>
          <div class="flex items-center gap-[3px] w-[50px]"><svg class="w-4 h-4 shrink-0"><use href="#of"/></svg><span>偏移</span></div>
          <div class="flex items-center gap-1 w-[53px] mr-[4px] border-r border-[#c8ced6] h-[20px]"><svg class="w-4 h-4 shrink-0"><use href="#st"/></svg><span>拉伸</span></div>
          <div class="flex items-center gap-1 w-[73px]"><svg class="w-4 h-4 shrink-0"><use href="#gr"/></svg><span>设置夹点</span></div>
        </div>
      </div>
      <div class="h-[28px] shrink-0 flex items-center">
        <div class="w-[627px] h-[26px] pl-[4px] bg-[#f7f9fc] flex items-center">
          <div class="w-[2px] h-[18px] border-l-2 border-dotted border-[#a8a8a8] mr-[3px]"></div>
          <div class="w-[58px] h-[24px] bg-white flex items-center justify-between pl-[2px] pr-[4px]"><span>第3层</span><svg class="w-[10px] h-[10px] shrink-0"><use href="#c"/></svg></div>
          <div class="w-[70px] ml-[2px] h-[24px] bg-white flex items-center justify-between pl-[2px] pr-[4px]"><span>板</span><svg class="w-[10px] h-[10px] shrink-0"><use href="#c"/></svg></div>
          <div class="w-[70px] ml-[2px] h-[24px] bg-white flex items-center justify-between pl-[2px] pr-[4px]"><span>现浇板</span><svg class="w-[10px] h-[10px] shrink-0"><use href="#c"/></svg></div>
          <div class="w-[70px] ml-[2px] h-[24px] bg-white flex items-center justify-between pl-[2px] pr-[4px]"><span>B-1</span><svg class="w-[10px] h-[10px] shrink-0"><use href="#c"/></svg></div>
          <div class="w-[70px] ml-[2px] h-[24px] bg-white flex items-center justify-between pl-[2px] pr-[4px]"><span>分层1</span><svg class="w-[10px] h-[10px] shrink-0"><use href="#c"/></svg></div>
          <div class="w-px h-[20px] ml-[5px] bg-[#c8ced6]"></div>
          <div class="ml-[5px] flex items-center gap-1 w-[50px]"><svg class="w-4 h-4 shrink-0"><use href="#sx"/></svg><span>属性</span></div>
          <div class="flex items-center gap-1 w-[72px]"><svg class="w-4 h-4 shrink-0"><use href="#ed"/></svg><span>编辑钢筋</span></div>
          <div class="flex items-center gap-[3px] w-[75px] h-[24px] pl-[3px] border border-[#5a9bdc] bg-[#e6f1fb]"><svg class="w-4 h-4 shrink-0"><use href="#li"/></svg><span>构件列表</span></div>
          <span class="ml-[50px] font-bold text-[13px]">»</span>
        </div>
        <div class="w-[423px] h-[26px] ml-[0px] bg-[#f7f9fc] flex items-center pl-[2px]">
          <div class="w-[2px] h-[18px] border-l-2 border-dotted border-[#a8a8a8] mr-[6px]"></div>
          <div class="flex items-center gap-[3px] w-[52px]"><svg class="w-4 h-4 shrink-0"><use href="#tp"/></svg><span>两点</span></div>
          <div class="flex items-center gap-[2px] w-[52px]"><svg class="w-4 h-4 shrink-0"><use href="#pl"/></svg><span>平行</span></div>
          <div class="flex items-center gap-[2px] w-[45px]"><svg class="w-4 h-4 shrink-0"><use href="#pa"/></svg><span>点角</span></div><svg class="w-[10px] h-[10px] shrink-0"><use href="#c"/></svg>
          <div class="ml-[5px] flex items-center gap-1 w-[73px]"><svg class="w-4 h-4 shrink-0"><use href="#ta"/></svg><span>三点辅轴</span></div><svg class="w-[10px] h-[10px] shrink-0"><use href="#c"/></svg>
          <div class="ml-[4px] flex items-center gap-1 w-[77px]"><svg class="w-4 h-4 shrink-0"><use href="#dl"/></svg><span>删除辅轴</span></div>
          <div class="flex items-center gap-[2px] w-[71px]"><svg class="w-4 h-4 shrink-0"><use href="#dm"/></svg><span>尺寸标注</span></div><svg class="w-[10px] h-[10px] shrink-0"><use href="#c"/></svg>
        </div>
      </div>
      <div class="h-[30px] shrink-0 flex items-center">
        <div class="w-[1018px] h-[27px] pl-[4px] bg-[#f7f9fc] flex items-center">
          <div class="w-[2px] h-[18px] border-l-2 border-dotted border-[#a8a8a8] mr-[2px]"></div>
          <div class="flex items-center gap-[2px] w-[50px] h-[25px] pl-[3px] border border-[#5a9bdc] bg-[#e6f1fb]"><svg class="w-4 h-4 shrink-0"><use href="#se"/></svg><span>选择</span></div><svg class="w-[10px] h-[10px] ml-[1px] shrink-0"><use href="#c"/></svg>
          <div class="w-px h-[20px] ml-[5px] bg-[#c8ced6]"></div>
          <div class="ml-[7px] flex items-center gap-[1px] w-[45px]"><svg class="w-4 h-4 shrink-0"><use href="#pt"/></svg><span>点</span></div>
          <div class="flex items-center gap-[1px] w-[50px]"><svg class="w-4 h-4 shrink-0"><use href="#ln"/></svg><span>直线</span></div>
          <div class="flex items-center gap-[2px] w-[70px]"><svg class="w-4 h-4 shrink-0"><use href="#ac"/></svg><span>三点画弧</span></div><svg class="w-[10px] h-[10px] shrink-0"><use href="#c"/></svg>
          <div class="ml-[3px] w-[55px] h-[24px] bg-white flex items-center justify-end pr-[1px]"><svg class="w-[10px] h-[10px] shrink-0"><use href="#c"/></svg></div>
          <div class="ml-[6px] flex items-center gap-[3px] w-[52px]"><svg class="w-4 h-4 shrink-0"><use href="#re"/></svg><span>矩形</span></div>
          <div class="w-px h-[20px] -ml-[1px] bg-[#c8ced6]"></div>
          <div class="ml-[4px] flex items-center gap-1 w-[68px]"><svg class="w-4 h-4 shrink-0"><use href="#sm"/></svg><span>智能布置</span></div><svg class="w-[10px] h-[10px] shrink-0"><use href="#c"/></svg>
          <div class="w-px h-[20px] ml-[7px] bg-[#c8ced6]"></div>
          <div class="ml-[4px] flex items-center gap-1 w-[86px]"><svg class="w-4 h-4 shrink-0"><use href="#au"/></svg><span>自动生成板</span></div>
          <div class="flex items-center gap-1 w-[76px]"><svg class="w-4 h-4 shrink-0"><use href="#bs"/></svg><span>按梁分割</span></div>
          <div class="flex items-center gap-[3px] w-[101px]"><svg class="w-4 h-4 shrink-0"><use href="#vi"/></svg><span>查看板内钢筋</span></div>
          <div class="flex items-center gap-[1px] w-[93px]"><svg class="w-4 h-4 shrink-0"><use href="#tri"/></svg><span>三点定义斜板</span></div><svg class="w-[10px] h-[10px] shrink-0"><use href="#c"/></svg>
          <div class="ml-[5px] flex items-center gap-1 w-[133px]"><svg class="w-4 h-4 shrink-0"><use href="#hg"/></svg><span>按标高批量定义斜板</span></div><svg class="w-[10px] h-[10px] shrink-0"><use href="#c"/></svg>
          <span class="ml-[24px] font-bold text-[13px]">»</span>
        </div>
        <div class="w-[30px] h-[27px] ml-[2px] bg-[#f7f9fc] flex items-center pl-[1px]"><div class="w-[2px] h-[18px] border-l-2 border-dotted border-[#a8a8a8]"></div><div class="w-[22px] h-[27px] ml-[2px] bg-white"></div></div>
      </div>
      <!-- canvas -->
      <div class="flex-1 min-h-0 relative bg-black">
        <svg class="block" width="1050" height="508" viewBox="294 168 1050 508" shape-rendering="crispEdges" font-family="Liberation Sans">
          <!-- axis grid -->
          <g stroke="#f00" fill="none">
            <path d="M294 197H1306M294 298H1306M294 462H1306M294 574H1306M294 626H1306"/>
            <path d="M336 168V676M474 197V676M613 576V676M1167 197V676M1306 197V676" />
          </g>
          <g stroke="#a00000" fill="none">
            <path d="M294 386H1306M294 436H1306M294 486H1306M294 595H1306"/>
            <path d="M555 626V676M663 626V676M840 626V676M890 626V676M948 626V676M1029 577V676"/>
            <path d="M452 420L386 486L466 566M667 628L702 663L737 628"/>
          </g>
          <g stroke="#0a7a0a" fill="none">
            <path d="M336 168V194M475 168V194M555 168V193M613 168V194M663 168V193M840 168V193M890 168V194M948 168V193M1029 168V194M1167 168V197M1306 168V197"/>
            <path d="M386 486L295 577M295 575L385 663L472 576M475 577L562 663M562 627L525 663M602 627L565 663"/>
          </g>
          <g fill="#7a78b0"><rect x="413" y="168" width="8" height="29"/><rect x="1083" y="168" width="8" height="29"/><rect x="413" y="575" width="8" height="29"/><rect x="1083" y="575" width="8" height="29"/></g>
          <!-- bubbles -->
          <use href="#bb" x="336" y="181"/><use href="#bb" x="475" y="181"/><use href="#bb" x="613" y="181"/><use href="#bb" x="890" y="181"/><use href="#bb" x="1029" y="181"/><use href="#bb" x="1167" y="181"/><use href="#bb" x="1306" y="181"/>
          <use href="#bb" x="307" y="197"/><use href="#bb" x="307" y="298"/><use href="#bb" x="307" y="462"/><use href="#bb" x="307" y="563"/><use href="#bb" x="307" y="574"/><use href="#bb" x="307" y="625"/>
          <use href="#bb" x="468" y="432"/><use href="#bb" x="385" y="663"/><use href="#bb" x="523" y="663"/><use href="#bb" x="565" y="663"/><use href="#bb" x="702" y="663"/><use href="#bb" x="706" y="630"/>
          <g fill="#cfcfcf" font-size="14" text-anchor="middle">
            <text x="336" y="186">2</text><text x="475" y="186">3</text><text x="613" y="186">4</text><text x="890" y="186">5</text><text x="1029" y="186">6</text><text x="1167" y="186">7</text><text x="1306" y="186">8</text>
            <text x="307" y="202">E</text><text x="307" y="303">D</text><text x="307" y="467">C</text><text x="307" y="568">B</text><text x="307" y="579">B</text><text x="307" y="630">A</text>
            <text x="468" y="437">A</text><text x="385" y="668">A</text><text x="523" y="668">1</text><text x="565" y="668">1</text><text x="702" y="668">2</text><text x="706" y="635">2</text>
            <text transform="translate(356 606) rotate(45)" font-size="16">3000</text>
            <text transform="translate(620 640) rotate(-60)" font-size="16">300</text>
          </g>
          <!-- slab fills -->
          <polygon points="474,197 663,386 474,386" fill="#a8a8a8"/>
          <polygon points="474,386 663,386 474,577" fill="#a8a8a8"/>
          <polygon points="663,386 751,386 751,435 612,577 474,577" fill="#b0b0b0"/>
          <polygon points="751,435 612,577 612,626 751,487" fill="#b0b0b0"/>
          <polygon points="474,197 1030,197 838,386 663,386" fill="#0068cf"/>
          <polygon points="1030,197 1030,577 838,386" fill="#0070dc"/>
          <polygon points="751,386 838,386 1030,577 893,577 751,435" fill="#0078e6"/>
          <polygon points="751,435 893,577 893,626 751,487" fill="#0070d8"/>
          <polygon points="751,487 891,626 612,626" fill="#0078e6"/>
          <rect x="555.500" y="577" width="57" height="49" fill="#b0b0b0"/><rect x="891" y="577" width="57" height="49" fill="#b0b0b0"/>
          <path d="M555.500 577V626H612M893 626H948.500V577M612 625.500H891" stroke="#fff" fill="none"/>
          <!-- yellow rebar -->
          <g stroke="#ff0" fill="none">
            <path stroke-width="2" d="M537 265V510M691 197V386M600 323H897M475 418H628M877 418H1028M663 579H838M728 515V625M573 577V626M909 577V626M555 608H612M893 608H948"/>
            <path d="M903 328V443"/>
            <path stroke-width="1.600" d="M595 197L788 390M823 390L1007 574M632 348L784 197M680 391L497 574M562 493L627 557M613 591L745 460M647 542L668 563M752 457L890 592M941 493L877 557M856 542L835 563"/>
          </g>
          <!-- magenta rebar -->
          <g stroke="#f0f" fill="none">
            <path stroke-width="2" d="M538 260H968M600 325V448M813 197V386M475 355H627M877 355H1028M965 260V512M774 510V625M705 533H798M594 577V626M928 577V626M555 592H612M893 592H948"/>
            <path stroke-width="1.600" d="M717 197L871 350M909 197L727 379M725 390L543 574M775 390L960 574M625 430L715 518M613 608L745 477M752 473L890 608M877 430L786 520"/>
          </g>
          <!-- markers -->
          <g fill="none">
            <path stroke="#5a5a5a" stroke-width="1.500" d="M508 370L497 386L508 402"/>
            <path stroke="#5a5a5a" stroke-width="2" d="M613 450V560M602 551L613 561L623 551M703 531H662M668 526L662 531L668 536"/>
            <path stroke="#ff8c20" stroke-width="1.500" d="M995 370L1007 386L995 402M737 231L746 222M755 222L766 231"/>
            <path stroke="#ff8c20" stroke-width="2" d="M798 531H840M836 526L840 531L836 536M890 450V560M880 551L890 561L900 551M740 600L750 608L760 600"/>
          </g>
          <!-- beams -->
          <g stroke="#00e000" fill="none">
            <path stroke-width="5" d="M472.500 197V577M1030 197V577"/>
            <path stroke-width="4" d="M470 195H1030M612 296.500H889M474 576.500H612M893 576.500H1030"/>
            <path stroke-width="8" d="M474 386H1030M613 197V296M889 197V296"/>
            <path stroke-width="8" d="M476 197L663 386M663 386L476 574M1028 197L840 386M840 386L1028 574"/>
            <path stroke-width="7" d="M751 435L893 577M751 435L612 576M751 488L889 626M751 488L613 626"/>
            <path stroke-width="5" d="M612 576V626M891 576V626"/>
            <path stroke="#00d800" stroke-width="8" d="M751 197V626"/>
          </g>
          <path d="M610 377l3 9-3 6zM894 377l-3 9 3 6zM740 580l11-3 11 3z" fill="#00e000"/>
          <path d="M612 627.500H893" stroke="#e8e800" stroke-width="3"/>
          <path d="M673 192H1020" stroke="#ff0" stroke-width="2"/>
          <!-- purple grips -->
          <g fill="#7000e0">
            <path d="M466 189h17v5h-4l-5 8h-8z"/><path d="M1021 189h16v13h-6l-2-8h-8z"/><rect x="605" y="189" width="16" height="8"/><rect x="881" y="189" width="17" height="8"/>
            <rect x="466" y="294" width="10" height="12"/><rect x="1028" y="294" width="9" height="12"/><rect x="605" y="294" width="16" height="4"/><rect x="881" y="294" width="17" height="4"/>
            <path d="M466 566h8l6 9h3v4H466z"/><path d="M1031 566h6v13h-16v-4h8z"/><rect x="605" y="574" width="8" height="5"/><rect x="890" y="574" width="8" height="5"/>
          </g>
          <!-- view gizmo -->
          <path d="M348 627V590" stroke="#00e000" stroke-width="4"/><path d="M348 578l-4 12h8z" fill="#00e000"/>
          <path d="M348 627H388" stroke="#f00" stroke-width="4"/><path d="M398 627l-10-4v8z" fill="#f00"/>
          <circle cx="348" cy="627" r="3.500" fill="#0a80f0"/>
          <path d="M358 581l5 5l5-5M363 586v5" stroke="#20c020" fill="none"/>
          <path d="M386 607l9 9M395 607l-9 9" stroke="#c01010" fill="none"/>
          <path d="M336 622h8l-8 10h8" stroke="#2080e0" fill="none"/>
        </svg>
        <div class="absolute left-[463px] top-[150px] w-[63px] h-[39px] bg-[#ffffe6] border border-[#a0a0a0] shadow-[2px_2px_3px_rgba(0,0,0,.55)] text-[12px] leading-[17px] pl-[2px] pt-[2px]">B-1<br />楼层:第3层</div>
      </div>
    </div>
  </div>
</div>
</body>
</html>
